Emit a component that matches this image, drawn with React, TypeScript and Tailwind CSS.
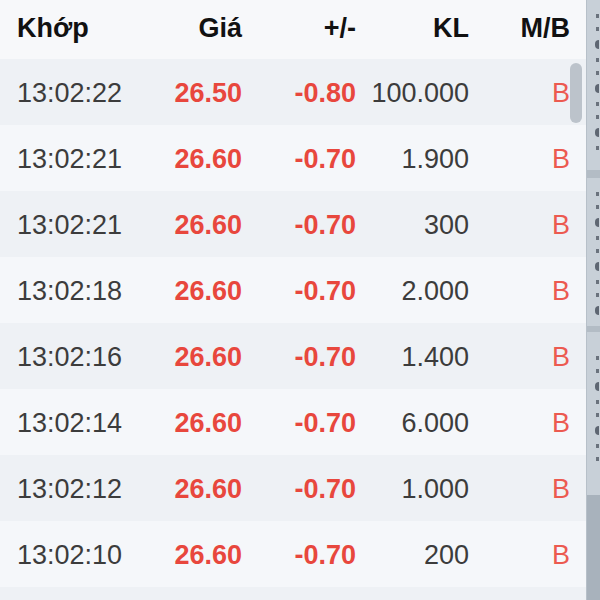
const rows = [
  { time: "13:02:22", price: "26.50", change: "-0.80", vol: "100.000", side: "B" },
  { time: "13:02:21", price: "26.60", change: "-0.70", vol: "1.900", side: "B" },
  { time: "13:02:21", price: "26.60", change: "-0.70", vol: "300", side: "B" },
  { time: "13:02:18", price: "26.60", change: "-0.70", vol: "2.000", side: "B" },
  { time: "13:02:16", price: "26.60", change: "-0.70", vol: "1.400", side: "B" },
  { time: "13:02:14", price: "26.60", change: "-0.70", vol: "6.000", side: "B" },
  { time: "13:02:12", price: "26.60", change: "-0.70", vol: "1.000", side: "B" },
  { time: "13:02:10", price: "26.60", change: "-0.70", vol: "200", side: "B" },
]

// clipped glyph edges of the neighbouring panel, drawn as small marks
function Marks({ n }: { n: number }) {
  return (
    <div className="flex flex-col items-end gap-[9px] pr-[1px]">
      {Array.from({ length: n }).map((_, i) => (
        <div
          key={i}
          className={
            i % 3 === 2
              ? "h-[9px] w-[4px] rounded-l-full bg-[#5e6672]"
              : "h-[4px] w-[3px] bg-[#6a727d]"
          }
        />
      ))}
    </div>
  )
}

export default function App() {
  return (
    <div className="flex h-[600px] w-[600px] overflow-hidden bg-[#f7f8fa] font-['Liberation_Sans',Arial,sans-serif] text-[27px]">
      <div className="relative w-[586px] shrink-0">
        {/* header */}
        <div className="flex h-[59px] items-center pb-[3px] font-bold text-[#111]">
          <div className="w-[150px] pl-[17px]">Khớp</div>
          <div className="w-[92px] text-right">Giá</div>
          <div className="w-[114px] text-right">+/-</div>
          <div className="w-[113px] text-right">KL</div>
          <div className="w-[101px] text-right">M/B</div>
        </div>

        {rows.map((r, i) => (
          <div
            key={i}
            className={
              "flex h-[66px] items-center pt-[3px] " +
              (i % 2 === 0 ? "bg-[#eef1f5]" : "bg-[#f5f7fa]")
            }
          >
            <div className="w-[150px] pl-[17px] text-[#3c3c3c]">{r.time}</div>
            <div className="w-[92px] text-right font-bold text-[#e8473d]">{r.price}</div>
            <div className="w-[114px] text-right font-bold text-[#e8473d]">{r.change}</div>
            <div className="w-[113px] text-right text-[#3c3c3c]">{r.vol}</div>
            <div className="w-[101px] text-right text-[#ec5a50]">{r.side}</div>
          </div>
        ))}
        {/* next row, cut off by the panel edge */}
        <div className="h-[66px] bg-[#eef1f5]" />

        {/* scrollbar thumb */}
        <div className="absolute left-[570px] top-[63px] h-[60px] w-[12px] rounded-full bg-[#bcc3cb]" />
      </div>

      {/* edge of neighbouring panel */}
      <div className="flex w-[14px] shrink-0 flex-col overflow-hidden border-l border-[#b7c0c9] bg-[#c8d0d8]">
        <div className="h-[170px] overflow-hidden pt-[14px]">
          <Marks n={10} />
        </div>
        <div className="h-[8px] bg-[#b3bcc5]" />
        <div className="h-[148px] overflow-hidden pt-[14px]">
          <Marks n={9} />
        </div>
        <div className="h-[6px] bg-[#b3bcc5]" />
        <div className="h-[163px] overflow-hidden pt-[24px]">
          <Marks n={8} />
        </div>
        <div className="flex-1 bg-[#a8b2bc]" />
      </div>
    </div>
  )
}
